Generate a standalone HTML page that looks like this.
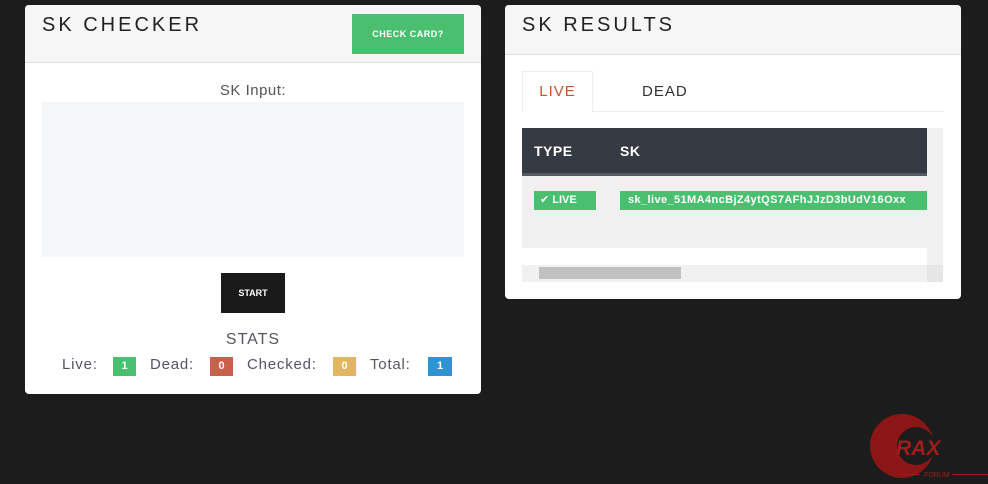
<!DOCTYPE html>
<html><head><meta charset="utf-8"><style>
*{box-sizing:border-box;margin:0;padding:0}
body{width:988px;height:484px;background:#1c1c1c;font-family:"Liberation Sans","DejaVu Sans",sans-serif;position:relative;overflow:hidden}
.card{position:absolute;background:#fff;border-radius:4px;overflow:hidden}
.hd{background:#f6f6f6;border-bottom:1px solid #ddd;position:relative}
.t{position:absolute;left:17px;top:9px;font-size:20px;letter-spacing:3px;color:#222}
.abs{position:absolute}
.badge{position:absolute;top:357px;height:19px;color:#fff;font-size:11px;font-weight:bold;text-align:center;line-height:19px}
.lbl{position:absolute;top:356px;font-size:15px;color:#556;letter-spacing:.8px}
</style></head><body>
<div class="card" style="left:25px;top:5px;width:456px;height:389px">
 <div class="hd" style="height:58px"><div class="t">SK CHECKER</div>
  <div class="abs" style="left:327px;top:9px;width:112px;height:40px;background:#4abf70;color:#fff;font-size:9px;font-weight:bold;text-align:center;line-height:40px;letter-spacing:.5px">CHECK CARD?</div></div>
 <div class="abs" style="left:0;width:456px;top:77px;text-align:center;font-size:15px;color:#555;letter-spacing:.5px">SK Input:</div>
 <div class="abs" style="left:17px;top:97px;width:422px;height:155px;background:#f5f6f7"></div>
 <div class="abs" style="left:196px;top:268px;width:64px;height:40px;background:#1a1a1a;color:#fff;font-size:9px;font-weight:bold;text-align:center;line-height:40px">START</div>
 <div class="abs" style="left:0;width:456px;top:326px;text-align:center;font-size:16px;color:#556;letter-spacing:1px">STATS</div>
</div>
<div class="lbl" style="left:62px">Live:</div><div class="badge" style="left:113px;width:23px;background:#4abf70">1</div>
<div class="lbl" style="left:150px">Dead:</div><div class="badge" style="left:210px;width:23px;background:#c9604c">0</div>
<div class="lbl" style="left:247px">Checked:</div><div class="badge" style="left:333px;width:23px;background:#e2b563">0</div>
<div class="lbl" style="left:370px">Total:</div><div class="badge" style="left:428px;width:24px;background:#2f94cf">1</div>

<div class="card" style="left:505px;top:5px;width:456px;height:294px">
 <div class="hd" style="height:50px"><div class="t">SK RESULTS</div></div>
 <div class="abs" style="left:17px;top:106px;width:422px;height:1px;background:#eee"></div>
 <div class="abs" style="left:17px;top:66px;width:71px;height:41px;border:1px solid #eee;border-bottom:none;background:#fff;text-align:center;line-height:40px;font-size:15px;color:#c0542f;letter-spacing:1px">LIVE</div>
 <div class="abs" style="left:137px;top:78px;font-size:15px;color:#333;letter-spacing:1px">DEAD</div>
 <div class="abs" style="left:17px;top:123px;width:405px;height:45px;background:#353a42;color:#fff;font-size:14px;font-weight:bold;letter-spacing:.5px">
  <span class="abs" style="left:12px;top:15px">TYPE</span><span class="abs" style="left:98px;top:15px">SK</span></div>
 <div class="abs" style="left:17px;top:168px;width:405px;height:3px;background:#555a60"></div>
 <div class="abs" style="left:17px;top:171px;width:405px;height:72px;background:#f0f0f0"></div>
 <div class="abs" style="left:29px;top:186px;width:62px;height:19px;background:#4abf70;color:#fff;font-size:11px;font-weight:bold;line-height:19px;padding-left:6px">✔ LIVE</div>
 <div class="abs" style="left:115px;top:186px;width:307px;height:19px;background:#4abf70;color:#fff;font-size:11px;font-weight:bold;line-height:19px;padding-left:8px;white-space:nowrap;overflow:hidden;letter-spacing:.4px">sk_live_51MA4ncBjZ4ytQS7AFhJJzD3bUdV16Oxx</div>
 <div class="abs" style="left:422px;top:123px;width:16px;height:137px;background:#f1f1f1"></div>
 <div class="abs" style="left:17px;top:260px;width:405px;height:17px;background:#f1f1f1"></div>
 <div class="abs" style="left:34px;top:262px;width:142px;height:12px;background:#c1c1c1"></div>
 <div class="abs" style="left:422px;top:260px;width:16px;height:17px;background:#e6e6e6"></div>
</div>
<svg class="abs" style="left:862px;top:408px" width="126" height="76">
 <circle cx="40" cy="38" r="32" fill="#8c1515"/><circle cx="54" cy="38" r="19" fill="#1c1c1c"/>
 <text x="34" y="47" font-size="21" font-weight="bold" font-style="italic" fill="#a01c1c" font-family="Liberation Sans">RAX</text>
 <text x="62" y="69" font-size="7" fill="#a01c1c" font-family="Liberation Sans">FORUM</text>
 <rect x="38" y="66" width="20" height="1" fill="#a01c1c"/><rect x="90" y="66" width="36" height="1" fill="#a01c1c"/>
</svg>
</body></html>
